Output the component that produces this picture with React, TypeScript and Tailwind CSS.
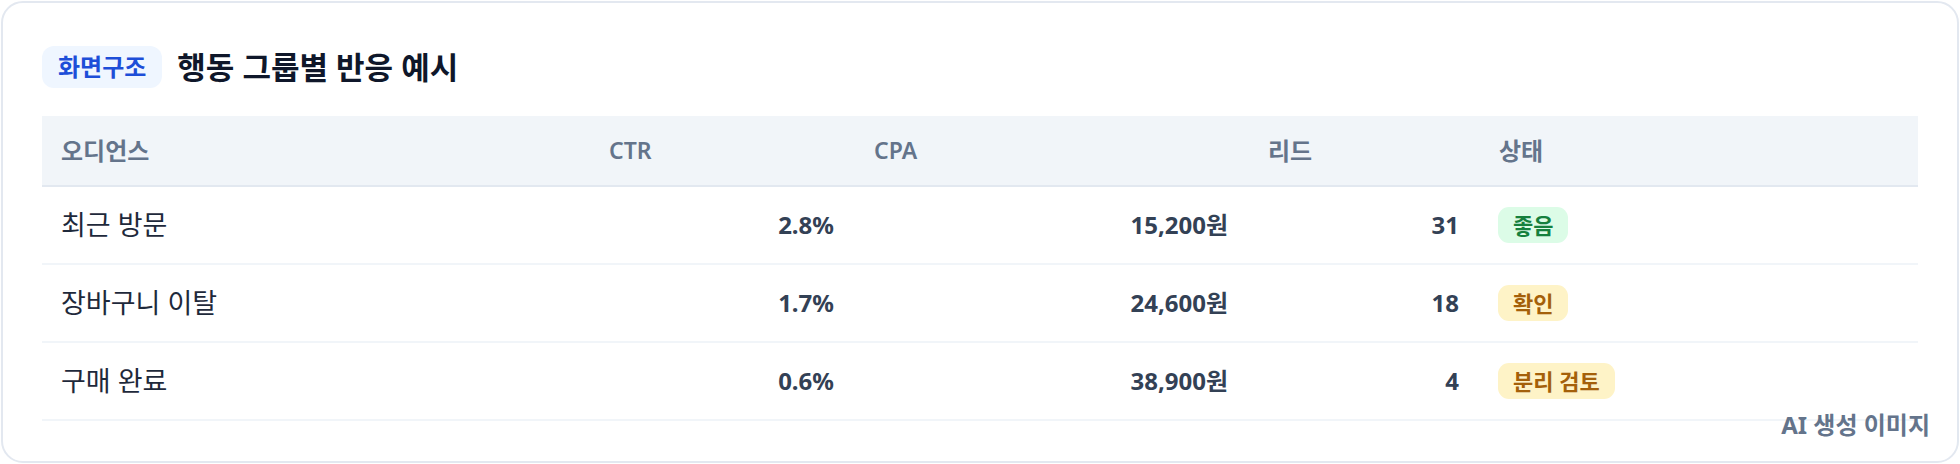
const rows = [
  { audience: "최근 방문", ctr: "2.8%", cpa: "15,200원", leads: 31, status: "좋음", tone: "good" },
  { audience: "장바구니 이탈", ctr: "1.7%", cpa: "24,600원", leads: 18, status: "확인", tone: "warn" },
  { audience: "구매 완료", ctr: "0.6%", cpa: "38,900원", leads: 4, status: "분리 검토", tone: "warn" },
];

const badgeTone: Record<string, string> = {
  good: "bg-[#dcfce7] text-[#15803d]",
  warn: "bg-[#fef3c7] text-[#a4600a]",
};

export default function App() {
  return (
    <div className="bg-white p-px font-['Noto_Sans','Noto_Sans_CJK_KR',sans-serif]">
      <div className="relative h-[462px] rounded-[22px] border-2 border-[#e3e8f0] bg-white px-[39px] pt-[43px]">
        <div className="mb-[28px] flex h-[42px] items-center gap-[15px]">
          <span className="flex h-[42px] items-center rounded-[12px] bg-[#eff6ff] px-[16px] text-[24px] font-semibold text-[#1d4ed8]">
            화면구조
          </span>
          <h2 className="text-[31px] leading-[42px] font-bold text-[#0f172a]">행동 그룹별 반응 예시</h2>
        </div>

        <table className="w-full table-fixed border-collapse">
          <colgroup>
            <col className="w-[547px]" />
            <col className="w-[265px]" />
            <col className="w-[394px]" />
            <col className="w-[231px]" />
            <col />
          </colgroup>
          <thead>
            <tr className="h-[70px] border-b-2 border-[#e2e8f0] bg-[#f1f5f9] text-left text-[24px] text-[#64748b]">
              <th className="px-[19px] font-semibold">오디언스</th>
              <th className="px-[20px] text-[23px] font-semibold">CTR</th>
              <th className="px-[20px] text-[23px] font-semibold">CPA</th>
              <th className="px-[20px] font-semibold">리드</th>
              <th className="px-[20px] font-semibold">상태</th>
            </tr>
          </thead>
          <tbody>
            {rows.map((row) => (
              <tr key={row.audience} className="h-[78px] border-b-2 border-[#f1f5f9]">
                <td className="px-[19px] text-[27px] text-[#1e293b]">{row.audience}</td>
                <td className="px-[20px] text-right text-[24px] font-bold text-[#334155]">{row.ctr}</td>
                <td className="px-[20px] text-right text-[24px] font-bold text-[#334155]">{row.cpa}</td>
                <td className="px-[20px] text-right text-[24px] font-bold text-[#334155]">{row.leads}</td>
                <td className="px-[19px]">
                  <span
                    className={`inline-flex h-[36px] items-center rounded-[11px] px-[15px] text-[22px] font-bold ${badgeTone[row.tone]}`}
                  >
                    {row.status}
                  </span>
                </td>
              </tr>
            ))}
          </tbody>
        </table>

        <span className="absolute bottom-[18px] right-[27px] text-[24px] font-bold text-[#64748b]">
          AI 생성 이미지
        </span>
      </div>
    </div>
  );
}
